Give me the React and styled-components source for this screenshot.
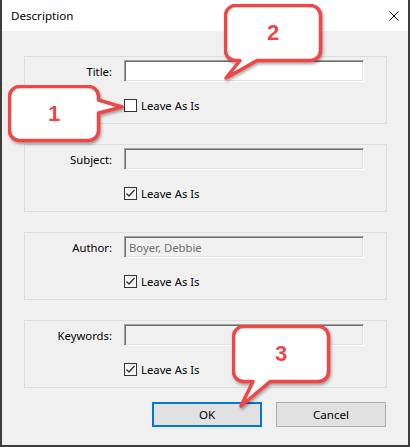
import styled, { createGlobalStyle } from "styled-components";

const GlobalStyle = createGlobalStyle`
  html, body {
    margin: 0;
    padding: 0;
    background: #f0f0f0;
  }
  * {
    box-sizing: border-box;
  }
`;

const Window = styled.div`
  position: relative;
  width: 410px;
  height: 447px;
  background: #f0f0f0;
  border: 2px solid #3d3d3d;
  border-top: 0;
  display: flex;
  flex-direction: column;
  font-family: "Noto Sans", "Liberation Sans", sans-serif;
  font-size: 11.3px;
  color: #000;
`;

const TitleBar = styled.div`
  height: 31px;
  background: #fff;
  display: flex;
  align-items: center;
  justify-content: space-between;
  padding: 0 9px 0 9px;
  font-size: 11.6px;
`;

const Body = styled.div`
  padding: 25px 21px 0 22px;
  display: flex;
  flex-direction: column;
`;

const Groups = styled.div`
  display: flex;
  flex-direction: column;
  gap: 20px;
`;

const GroupBox = styled.div`
  height: 68px;
  border: 1px solid #dcdcdc;
  padding-top: 3px;
  display: grid;
  grid-template-columns: 87px 240px;
  grid-template-rows: 22px 16px;
  column-gap: 12px;
  row-gap: 15px;
`;

const Label = styled.label`
  display: flex;
  align-items: center;
  justify-content: flex-end;
`;

const Field = styled.div`
  height: 22px;
  background: ${(p) => (p.$disabled ? "#f0f0f0" : "#fff")};
  border: 1px solid;
  border-color: #a0a0a0 #fff #fff #a0a0a0;
  box-shadow: inset 1px 1px 0 #6e6e6e, inset -1px -1px 0 #e3e3e3;
  color: #6d6d6d;
  display: flex;
  align-items: center;
  padding-left: 4px;
`;

const CheckRow = styled.div`
  grid-column: 2;
  display: flex;
  align-items: center;
  gap: 4px;
`;

const Box = styled.span`
  width: 13px;
  height: 13px;
  border: 1px solid #333;
  background: ${(p) => (p.$checked ? "#f7f7f7" : "#fff")};
  display: flex;
  align-items: center;
  justify-content: center;
`;

const Buttons = styled.div`
  margin-top: 14px;
  margin-right: 1px;
  display: flex;
  justify-content: flex-end;
  gap: 14px;
`;

const Button = styled.button`
  width: 110px;
  height: 25px;
  font-family: inherit;
  font-size: 11.6px;
  color: #000;
  background: #e1e1e1;
  border: ${(p) => (p.$default ? "2px solid #0078d7" : "1px solid #adadad")};
  padding: 0;
`;

const Callout = styled.div`
  position: absolute;
  left: ${(p) => p.$x}px;
  top: ${(p) => p.$y}px;
  width: ${(p) => p.$w}px;
  height: ${(p) => p.$h}px;
  filter: drop-shadow(1px 2px 1.5px rgba(0, 0, 0, 0.35));

  svg {
    position: absolute;
    inset: 0;
  }
`;

const Num = styled.span`
  position: absolute;
  left: 0;
  top: 0;
  width: ${(p) => p.$w}px;
  height: ${(p) => p.$h}px;
  display: flex;
  align-items: center;
  justify-content: center;
  font-family: "Liberation Sans", Arial, sans-serif;
  font-weight: 700;
  font-size: 22px;
  color: #f24242;
`;

function CheckBox({ checked }) {
  return (
    <Box $checked={checked}>
      {checked && (
        <svg width="11" height="11" viewBox="0 0 11 11">
          <path d="M1.5 5.5 L4 8 L9.5 2" fill="none" stroke="#333" strokeWidth="1.3" />
        </svg>
      )}
    </Box>
  );
}

function Group({ label, value, disabled, checked }) {
  return (
    <GroupBox>
      <Label>{label}</Label>
      <Field $disabled={disabled}>{value}</Field>
      <CheckRow>
        <CheckBox checked={checked} />
        <span>Leave As Is</span>
      </CheckRow>
    </GroupBox>
  );
}

// rounded bubble with a pointer; bubble is bw x bh in local coords
const callouts = [
  {
    n: 1, x: 6, y: 85, w: 118, h: 62, bw: 92, bh: 57,
    d: "M11.5 1.5 H80.5 A10 10 0 0 1 90.5 11.5 V15 L114 22 L90.5 28 V45.5 A10 10 0 0 1 80.5 55.5 H11.5 A10 10 0 0 1 1.5 45.5 V11.5 A10 10 0 0 1 11.5 1.5 Z",
  },
  {
    n: 2, x: 222, y: 4, w: 100, h: 78, bw: 98, bh: 58,
    d: "M11.5 1.5 H86.5 A10 10 0 0 1 96.5 11.5 V46.5 A10 10 0 0 1 86.5 56.5 H33 L2 74 L16 56.5 H11.5 A10 10 0 0 1 1.5 46.5 V11.5 A10 10 0 0 1 11.5 1.5 Z",
  },
  {
    n: 3, x: 230, y: 325, w: 100, h: 84, bw: 98, bh: 58,
    d: "M11.5 1.5 H86.5 A10 10 0 0 1 96.5 11.5 V46.5 A10 10 0 0 1 86.5 56.5 H38 L9 81 L21 56.5 H11.5 A10 10 0 0 1 1.5 46.5 V11.5 A10 10 0 0 1 11.5 1.5 Z",
  },
];

export default function App() {
  return (
    <>
      <GlobalStyle />
      <Window>
        <TitleBar>
          <span>Description</span>
          <svg width="10" height="10" viewBox="0 0 10 10">
            <path d="M0.5 0.5 L9.5 9.5 M9.5 0.5 L0.5 9.5" stroke="#000" strokeWidth="1" />
          </svg>
        </TitleBar>
        <Body>
          <Groups>
            <Group label="Title:" checked={false} />
            <Group label="Subject:" disabled checked />
            <Group label="Author:" value="Boyer, Debbie" disabled checked />
            <Group label="Keywords:" disabled checked />
          </Groups>
          <Buttons>
            <Button $default>OK</Button>
            <Button>Cancel</Button>
          </Buttons>
        </Body>
        {callouts.map((c) => (
          <Callout key={c.n} $x={c.x} $y={c.y} $w={c.w} $h={c.h}>
            <svg width={c.w} height={c.h} viewBox={`0 0 ${c.w} ${c.h}`}>
              <path d={c.d} fill="#fff" stroke="#f24646" strokeWidth="3.5" strokeLinejoin="round" />
            </svg>
            <Num $w={c.bw} $h={c.bh}>{c.n}</Num>
          </Callout>
        ))}
      </Window>
    </>
  );
}
